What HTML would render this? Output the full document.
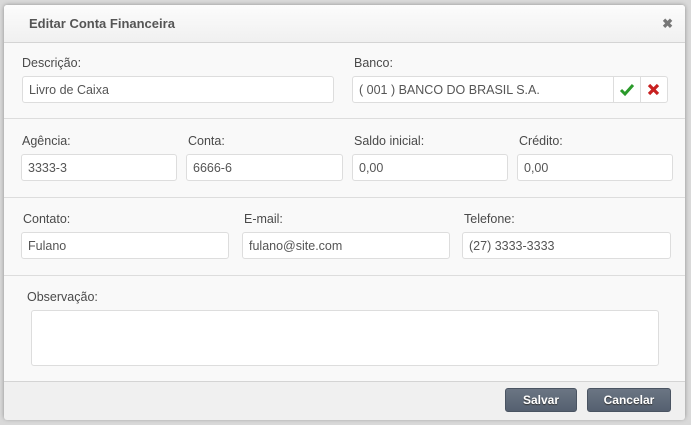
<html><head><style>
body{margin:0;width:691px;height:425px;background:#d9d9d9;position:relative;overflow:hidden;font-family:"Liberation Sans",sans-serif;font-size:13px;color:#555}
.dlg{position:absolute;left:4px;top:5px;width:681px;height:414px;background:#f9f9f9;border-radius:3px;box-shadow:0 0 4px rgba(0,0,0,.35)}
.hd{position:absolute;left:0;top:0;width:681px;height:37px;background:linear-gradient(#fcfcfc,#f0f0f0);border-bottom:1px solid #d4d4d4;border-radius:3px 3px 0 0}
.hd b{position:absolute;left:25px;top:11px;font-size:13px;color:#555}
.x{position:absolute;right:12px;top:11px;font-size:13px;color:#777;font-weight:bold}
.hr{position:absolute;left:0;width:681px;border-top:1px solid #ddd}
.l{position:absolute;font-size:12.5px;color:#4a4a4a}
.i{position:absolute;box-sizing:border-box;height:27px;background:#fff;border:1px solid #ddd;border-radius:3px;padding:6px 6px;font-size:12.5px;color:#555}
.btn{position:absolute;height:24px;top:383px;box-sizing:border-box;background:linear-gradient(#6b7583,#556070);border:1px solid #4a5462;border-radius:3px;color:#fff;font-weight:bold;font-size:12px;text-align:center;line-height:22px;text-shadow:0 1px 1px #333}
.ft{position:absolute;left:0;top:376px;width:681px;height:38px;background:#f0f0f0;border-top:1px solid #d4d4d4;border-radius:0 0 3px 3px}
</style></head><body>
<div class="dlg">
<div class="hd"><b>Editar Conta Financeira</b><span class="x">✖</span></div>
<div class="l" style="left:18px;top:51px">Descrição:</div>
<div class="i" style="left:18px;top:71px;width:312px">Livro de Caixa</div>
<div class="l" style="left:350px;top:51px">Banco:</div>
<div class="i" style="left:348px;top:71px;width:262px;border-radius:3px 0 0 3px">( 001 ) BANCO DO BRASIL S.A.</div>
<div class="i" style="left:609px;top:71px;width:28px;border-radius:0;padding:0"><svg width="26" height="25" viewBox="0 0 26 25"><path d="M7 13l4 4 8-9" stroke="#2a9a2a" stroke-width="3" fill="none"/></svg></div>
<div class="i" style="left:636px;top:71px;width:28px;border-radius:0 3px 3px 0;padding:0"><svg width="26" height="25" viewBox="0 0 26 25"><path d="M8 8l9 9M17 8l-9 9" stroke="#c82020" stroke-width="3.2"/></svg></div>
<div class="hr" style="top:113px"></div>
<div class="l" style="left:18px;top:129px">Agência:</div>
<div class="i" style="left:17px;top:149px;width:156px">3333-3</div>
<div class="l" style="left:184px;top:129px">Conta:</div>
<div class="i" style="left:182px;top:149px;width:157px">6666-6</div>
<div class="l" style="left:350px;top:129px">Saldo inicial:</div>
<div class="i" style="left:348px;top:149px;width:156px">0,00</div>
<div class="l" style="left:515px;top:129px">Crédito:</div>
<div class="i" style="left:513px;top:149px;width:156px">0,00</div>
<div class="hr" style="top:192px"></div>
<div class="l" style="left:19px;top:207px">Contato:</div>
<div class="i" style="left:17px;top:227px;width:208px">Fulano</div>
<div class="l" style="left:240px;top:207px">E-mail:</div>
<div class="i" style="left:238px;top:227px;width:208px">fulano@site.com</div>
<div class="l" style="left:460px;top:207px">Telefone:</div>
<div class="i" style="left:458px;top:227px;width:209px">(27) 3333-3333</div>
<div class="hr" style="top:270px"></div>
<div class="l" style="left:23px;top:285px">Observação:</div>
<div class="i" style="left:27px;top:305px;width:628px;height:56px"></div>
<div class="ft"></div>
<div class="btn" style="left:501px;width:72px">Salvar</div>
<div class="btn" style="left:583px;width:84px">Cancelar</div>
</div>
</body></html>
